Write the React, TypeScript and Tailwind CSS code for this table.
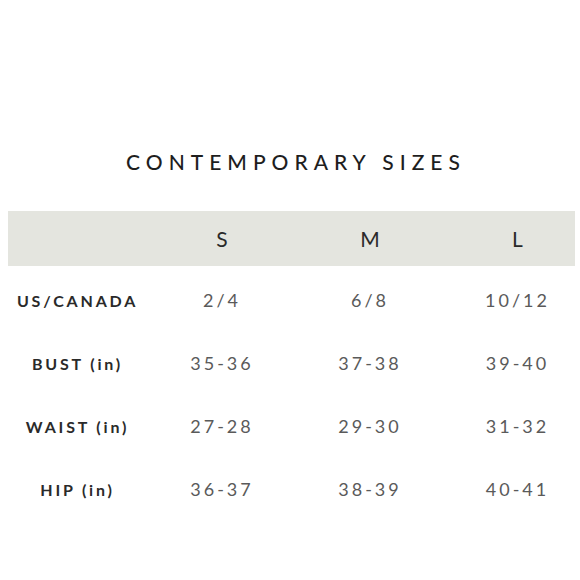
const rows = [
  { label: 'US/CANADA', values: ['2/4', '6/8', '10/12'] },
  { label: 'BUST (in)', values: ['35-36', '37-38', '39-40'] },
  { label: 'WAIST (in)', values: ['27-28', '29-30', '31-32'] },
  { label: 'HIP (in)', values: ['36-37', '38-39', '40-41'] },
];

const cols = 'grid grid-cols-[136px_156px_140px_1fr] items-center';

export default function App() {
  return (
    <div className="w-[580px] h-[580px] bg-white font-['Lato',sans-serif] pt-[148px]">
      <h1 className="text-center text-[21px] leading-[28px] tracking-[6px] text-[#1e1e1e] font-medium pl-[12px]">
        CONTEMPORARY SIZES
      </h1>

      {/* size header band */}
      <div className={`${cols} mt-[35px] ml-[8px] w-[567px] h-[55px] bg-[#e4e5df] text-[21px] text-[#2a2a2a]`}>
        <div />
        <div className="text-center">S</div>
        <div className="text-center">M</div>
        <div className="text-center pl-5">L</div>
      </div>

      <div className="mt-[3px] ml-[8px] w-[567px]">
        {rows.map((row) => (
          <div key={row.label} className={`${cols} h-[63px]`}>
            <div className="text-center text-[16px] font-bold tracking-[2.8px] text-[#2a2a2a] pl-[3px]">{row.label}</div>
            {row.values.map((v, i) => (
              <div
                key={v}
                className={`text-center text-[18px] tracking-[3px] font-normal text-[#5a5a5a] ${i === 2 ? 'pl-5' : ''}`}
              >
                {v}
              </div>
            ))}
          </div>
        ))}
      </div>
    </div>
  );
}
